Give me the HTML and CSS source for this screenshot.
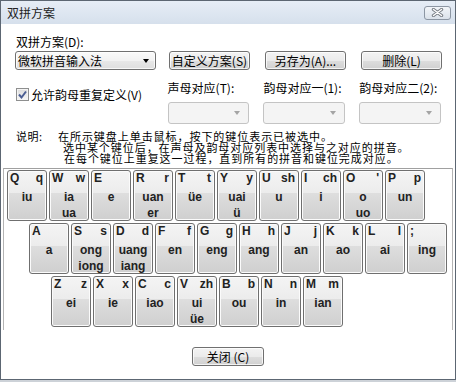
FILE: index.html
```html
<!DOCTYPE html>
<html lang="zh-CN">
<head>
<meta charset="utf-8">
<title>双拼方案</title>
<link rel="stylesheet" href="styles.css">
</head>
<body>
<div class="window">
  <div class="titlebar">
    <span class="title">双拼方案</span>
    <div class="close">
      <svg width="13" height="9" viewBox="0 0 13 9">
        <path d="M2.5 1.5 L10.5 7.5 M10.5 1.5 L2.5 7.5" stroke="#7a7f86" stroke-width="3.4" stroke-linecap="round" fill="none"/>
        <path d="M2.5 1.5 L10.5 7.5 M10.5 1.5 L2.5 7.5" stroke="#ffffff" stroke-width="1.4" stroke-linecap="round" fill="none"/>
      </svg>
    </div>
  </div>
  <div class="content">
    <div class="row1">
      <div class="scheme">
        <div class="lbl">双拼方案(D):</div>
        <div class="combo"><span>微软拼音输入法</span><span class="arrow"></span></div>
      </div>
      <div class="btns">
        <div class="btn">自定义方案(S)</div>
        <div class="btn">另存为(A)...</div>
        <div class="btn">删除(L)</div>
      </div>
    </div>
    <div class="row2">
      <div class="checkcell">
        <div class="check">
          <span class="box">
            <svg width="11" height="11" viewBox="0 0 11 11"><path d="M2 5.5 L4.5 8.5 L9 2.5" stroke="#4a5d92" stroke-width="2" fill="none"/></svg>
          </span>
          <span>允许韵母重复定义(V)</span>
        </div>
      </div>
      <div class="field"><div class="lbl">声母对应(T):</div><div class="dcombo"><span class="darrow"></span></div></div>
      <div class="field"><div class="lbl">韵母对应一(1):</div><div class="dcombo"><span class="darrow"></span></div></div>
      <div class="field"><div class="lbl">韵母对应二(2):</div><div class="dcombo"><span class="darrow"></span></div></div>
    </div>
    <div class="desc">
      <div class="dlabel">说明:</div>
      <div class="dlines">
        <div class="l1">在所示键盘上单击鼠标，按下的键位表示已被选中。</div>
        <div class="l2">选中某个键位后，在声母及韵母对应列表中选择与之对应的拼音。</div>
        <div class="l3">在每个键位上重复这一过程，直到所有的拼音和键位完成对应。</div>
      </div>
    </div>
    <div class="keyboard">
      <div class="krow r1">
        <div class="key"><div class="kl"><span>Q</span><span>q</span></div><div class="py">iu</div></div>
        <div class="key"><div class="kl"><span>W</span><span>w</span></div><div class="py">ia</div><div class="py">ua</div></div>
        <div class="key"><div class="kl"><span>E</span><span></span></div><div class="py">e</div></div>
        <div class="key"><div class="kl"><span>R</span><span>r</span></div><div class="py">uan</div><div class="py">er</div></div>
        <div class="key"><div class="kl"><span>T</span><span>t</span></div><div class="py">üe</div></div>
        <div class="key"><div class="kl"><span>Y</span><span>y</span></div><div class="py">uai</div><div class="py">ü</div></div>
        <div class="key"><div class="kl"><span>U</span><span>sh</span></div><div class="py">u</div></div>
        <div class="key"><div class="kl"><span>I</span><span>ch</span></div><div class="py">i</div></div>
        <div class="key"><div class="kl"><span>O</span><span>'</span></div><div class="py">o</div><div class="py">uo</div></div>
        <div class="key"><div class="kl"><span>P</span><span>p</span></div><div class="py">un</div></div>
      </div>
      <div class="krow r2">
        <div class="key"><div class="kl"><span>A</span><span></span></div><div class="py">a</div></div>
        <div class="key"><div class="kl"><span>S</span><span>s</span></div><div class="py">ong</div><div class="py">iong</div></div>
        <div class="key"><div class="kl"><span>D</span><span>d</span></div><div class="py">uang</div><div class="py">iang</div></div>
        <div class="key"><div class="kl"><span>F</span><span>f</span></div><div class="py">en</div></div>
        <div class="key"><div class="kl"><span>G</span><span>g</span></div><div class="py">eng</div></div>
        <div class="key"><div class="kl"><span>H</span><span>h</span></div><div class="py">ang</div></div>
        <div class="key"><div class="kl"><span>J</span><span>j</span></div><div class="py">an</div></div>
        <div class="key"><div class="kl"><span>K</span><span>k</span></div><div class="py">ao</div></div>
        <div class="key"><div class="kl"><span>L</span><span>l</span></div><div class="py">ai</div></div>
        <div class="key"><div class="kl"><span>;</span><span></span></div><div class="py">ing</div></div>
      </div>
      <div class="krow r3">
        <div class="key"><div class="kl"><span>Z</span><span>z</span></div><div class="py">ei</div></div>
        <div class="key"><div class="kl"><span>X</span><span>x</span></div><div class="py">ie</div></div>
        <div class="key"><div class="kl"><span>C</span><span>c</span></div><div class="py">iao</div></div>
        <div class="key"><div class="kl"><span>V</span><span>zh</span></div><div class="py">ui</div><div class="py">üe</div></div>
        <div class="key"><div class="kl"><span>B</span><span>b</span></div><div class="py">ou</div></div>
        <div class="key"><div class="kl"><span>N</span><span>n</span></div><div class="py">in</div></div>
        <div class="key"><div class="kl"><span>M</span><span>m</span></div><div class="py">ian</div></div>
      </div>
    </div>
    <div class="footer">
      <div class="btn closebtn">关闭 (C)</div>
    </div>
  </div>
</div>
</body>
</html>
```
FILE: styles.css
```css
* { box-sizing: border-box; }
html, body { margin: 0; padding: 0; }
body {
  width: 456px;
  height: 382px;
  overflow: hidden;
  background: #cdd2d8;
  font-family: "Noto Sans CJK SC", "Liberation Sans", sans-serif;
  font-size: 12px;
  color: #000;
}
.window {
  width: 456px;
  height: 380px;
  border: 1px solid #5c6672;
  background: #fff;
  display: flex;
  flex-direction: column;
}
.titlebar {
  height: 23px;
  flex: none;
  background: linear-gradient(#e6edf6, #d6e0ec);
  display: flex;
  align-items: center;
  justify-content: space-between;
  padding: 0 4px 0 6px;
}
.title { line-height: 14px; color: #222; }
.close {
  width: 27px;
  height: 14px;
  border: 1px solid #8c96a3;
  border-radius: 3px;
  background: linear-gradient(#f2f5f9, #dbe2ea);
  display: flex;
  align-items: center;
  justify-content: center;
}
.close svg { display: block; }
.content {
  flex: 1;
  display: flex;
  flex-direction: column;
  padding-top: 11px;
}
.lbl { line-height: 14px; white-space: nowrap; }
.row1 {
  display: flex;
  align-items: flex-end;
  padding-left: 14px;
}
.scheme { width: 141px; }
.scheme .lbl { padding-left: 1px; margin-bottom: 2px; }
.combo, .btn {
  height: 19px;
  border: 1px solid #707070;
  border-radius: 3px;
  background: linear-gradient(#f3f3f3 0%, #ebebeb 50%, #dedede 50%, #d0d0d0 100%);
  box-shadow: inset 0 0 0 1px rgba(255,255,255,0.75);
  line-height: 17px;
  white-space: nowrap;
}
.combo {
  display: flex;
  justify-content: space-between;
  align-items: center;
  padding: 0 5px 0 2px;
  background: linear-gradient(#fafafa 0%, #f2f2f2 50%, #e8e8e8 50%, #dedede 100%);
}
.arrow {
  width: 0;
  height: 0;
  border-left: 3.5px solid transparent;
  border-right: 3.5px solid transparent;
  border-top: 4px solid #000;
  margin-right: 1px;
}
.btns {
  display: flex;
  gap: 15px;
  margin-left: 13px;
}
.btn {
  width: 81px;
  text-align: center;
  overflow: hidden;
}
.row2 {
  display: flex;
  margin-top: 11px;
  padding-left: 14px;
}
.checkcell { width: 153px; }
.check {
  display: flex;
  align-items: center;
  margin-top: 7px;
  padding-left: 1px;
  line-height: 13px;
  white-space: nowrap;
}
.box {
  width: 13px;
  height: 13px;
  border: 1px solid #8e8f8f;
  background: linear-gradient(#dcdcdc, #f6f6f6);
  box-shadow: inset 0 0 0 1px #f4f4f4;
  display: flex;
  align-items: center;
  justify-content: center;
  margin-right: 2px;
}
.box svg { display: block; }
.field { width: 82px; margin-right: 14px; }
.dcombo {
  margin-top: 7px;
  height: 22px;
  border: 1px solid #c4c4c4;
  border-radius: 3px;
  background: #f4f4f4;
  display: flex;
  justify-content: flex-end;
  align-items: center;
  padding-right: 8px;
}
.darrow {
  width: 0;
  height: 0;
  border-left: 3.5px solid transparent;
  border-right: 3.5px solid transparent;
  border-top: 4px solid #a4a4a4;
}
.desc {
  display: flex;
  margin-top: 7px;
  padding-left: 15px;
  font-size: 11px;
  line-height: 11px;
  white-space: nowrap;
}
.dlabel { width: 42px; letter-spacing: 0.5px; }
.dlines { letter-spacing: 0.95px; }
.l2 { padding-left: 5px; }
.l3 { padding-left: 6px; }
.keyboard {
  margin: 4px 2px 0 2px;
  border-top: 1px solid #a0a0a0;
  border-left: 1px solid #b4b4b4;
  border-right: 1px solid #b4b4b4;
  padding: 1px 0 3px 3px;
  display: flex;
  flex-direction: column;
  gap: 2px;
}
.krow { display: flex; gap: 2px; }
.r2 { margin-left: 22px; }
.r3 { margin-left: 44px; }
.key {
  width: 40px;
  height: 51px;
  border: 1px solid #6f6f6f;
  border-radius: 3px;
  background: linear-gradient(#f4f4f4 0%, #ececec 45%, #dedede 45%, #cfcfcf 100%);
  box-shadow: inset 0 0 0 1px #fbfbfb;
  font-family: "Liberation Sans", Arial, sans-serif;
  font-weight: bold;
  font-size: 12px;
  color: #222;
}
.kl {
  display: flex;
  justify-content: space-between;
  padding: 0 3px 0 2px;
  margin-top: 1px;
  line-height: 13px;
}
.py {
  text-align: center;
  line-height: 16px;
}
.kl + .py { margin-top: 4px; }
.footer {
  display: flex;
  justify-content: center;
  padding-top: 17px;
}
.closebtn { width: 72px; }
```
